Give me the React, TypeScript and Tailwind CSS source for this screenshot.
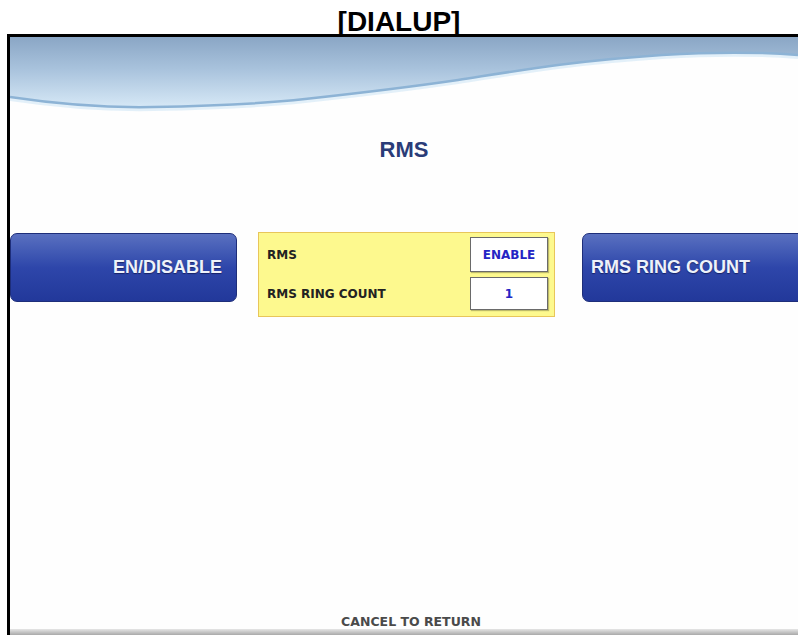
import React from 'react';

const Wave: React.FC = () => (
  <svg className="absolute left-0 top-0" width="788" height="80" viewBox="0 0 788 80" preserveAspectRatio="none">
    <defs>
      <linearGradient id="waveFill" x1="0" y1="0" x2="0" y2="1">
        <stop offset="0" stopColor="#8aa6c5" />
        <stop offset="0.45" stopColor="#a8c2dc" />
        <stop offset="1" stopColor="#d6e8f6" />
      </linearGradient>
    </defs>
    <path
      d="M0 0 H788 V18 C750 14 700 14 652 18 C560 24 500 35 448 43 C400 50 350 56 295 62 C250 67 200 69 143 70 C90 71 40 66 0 60 Z"
      fill="url(#waveFill)"
    />
    <path
      d="M0 62 C40 68 90 73 143 72 C200 71 250 69 295 64 C350 58 400 52 448 45 C500 37 560 26 652 20 C700 17 750 17 788 20"
      fill="none"
      stroke="#dcecf8"
      strokeWidth="4"
      opacity="0.8"
    />
    <path
      d="M0 60 C40 66 90 71 143 70 C200 69 250 67 295 62 C350 56 400 50 448 43 C500 35 560 24 652 18 C700 15 750 15 788 18"
      fill="none"
      stroke="#8db3d5"
      strokeWidth="2.5"
    />
  </svg>
);

const SideButton: React.FC<{ label: string; align: 'left' | 'right' }> = ({ label, align }) => (
  <div
    className={
      align === 'right'
        ? 'mt-px flex h-[69px] w-[227px] shrink-0 items-center justify-end rounded-[7px] border border-[#1e2e7a] bg-gradient-to-b from-[#5a70c0] via-[#2e46aa] to-[#22389a] pr-[14px]'
        : 'mt-px flex h-[69px] w-[240px] shrink-0 items-center justify-start rounded-[7px] border border-[#1e2e7a] bg-gradient-to-b from-[#5a70c0] via-[#2e46aa] to-[#22389a] pl-[8px]'
    }
  >
    <span className="font-['Liberation_Sans',Arial,sans-serif] text-[18px] font-bold text-[#eef2fa] [text-shadow:0_1px_1px_rgba(0,0,40,0.5)]">
      {label}
    </span>
  </div>
);

const ValueBox: React.FC<{ value: string; h: string }> = ({ value, h }) => (
  <div className={`flex w-[78px] items-center justify-center border border-[#6a6a6a] bg-white shadow-[1px_1px_1px_rgba(0,0,0,0.25)] ${h}`}>
    <span className="font-['DejaVu_Sans',Verdana,sans-serif] text-[12px] font-bold text-[#2424c4]">{value}</span>
  </div>
);

export default function App() {
  return (
    <div className="h-[635px] w-[798px] overflow-hidden bg-white">
      <div className="h-[34px] text-center">
        <span className="inline-block pt-[8px] font-['Liberation_Sans',Arial,sans-serif] text-[28px] font-bold leading-[28px] text-black">
          [DIALUP]
        </span>
      </div>
      <div className="relative ml-[7px] flex h-[601px] flex-col overflow-hidden border-l-[3px] border-t-[3px] border-black bg-[#fefefe]">
        <Wave />
        <div className="relative pt-[100px] text-center">
          <span className="font-['Liberation_Sans',Arial,sans-serif] text-[22px] font-bold leading-[26px] text-[#2a3c78]">RMS</span>
        </div>
        <div className="relative mt-[69px] flex items-start">
          <SideButton label="EN/DISABLE" align="right" />
          <div className="ml-[21px] flex h-[85px] w-[297px] shrink-0 flex-col gap-[5px] border border-[#e8c65a] bg-[#fdf98e] pr-[6px] pt-[4px]">
            <div className="flex h-[35px] items-center justify-between">
              <span className="pl-[8px] font-['DejaVu_Sans',Verdana,sans-serif] text-[12px] font-bold text-[#222]">RMS</span>
              <ValueBox value="ENABLE" h="h-[35px]" />
            </div>
            <div className="flex h-[33px] items-center justify-between">
              <span className="pl-[8px] font-['DejaVu_Sans',Verdana,sans-serif] text-[12px] font-bold text-[#222]">RMS RING COUNT</span>
              <ValueBox value="1" h="h-[33px]" />
            </div>
          </div>
          <div className="ml-[27px]">
            <SideButton label="RMS RING COUNT" align="left" />
          </div>
        </div>
        <div className="flex-1" />
        <div className="h-[15px] pl-[14px] text-center font-['DejaVu_Sans',Verdana,sans-serif] text-[12.5px] font-bold leading-[15px] text-[#4a4a4a]">
          CANCEL TO RETURN
        </div>
        <div className="h-[6px] bg-gradient-to-b from-[#e6e6e6] to-[#a9a9a9]" />
      </div>
    </div>
  );
}
